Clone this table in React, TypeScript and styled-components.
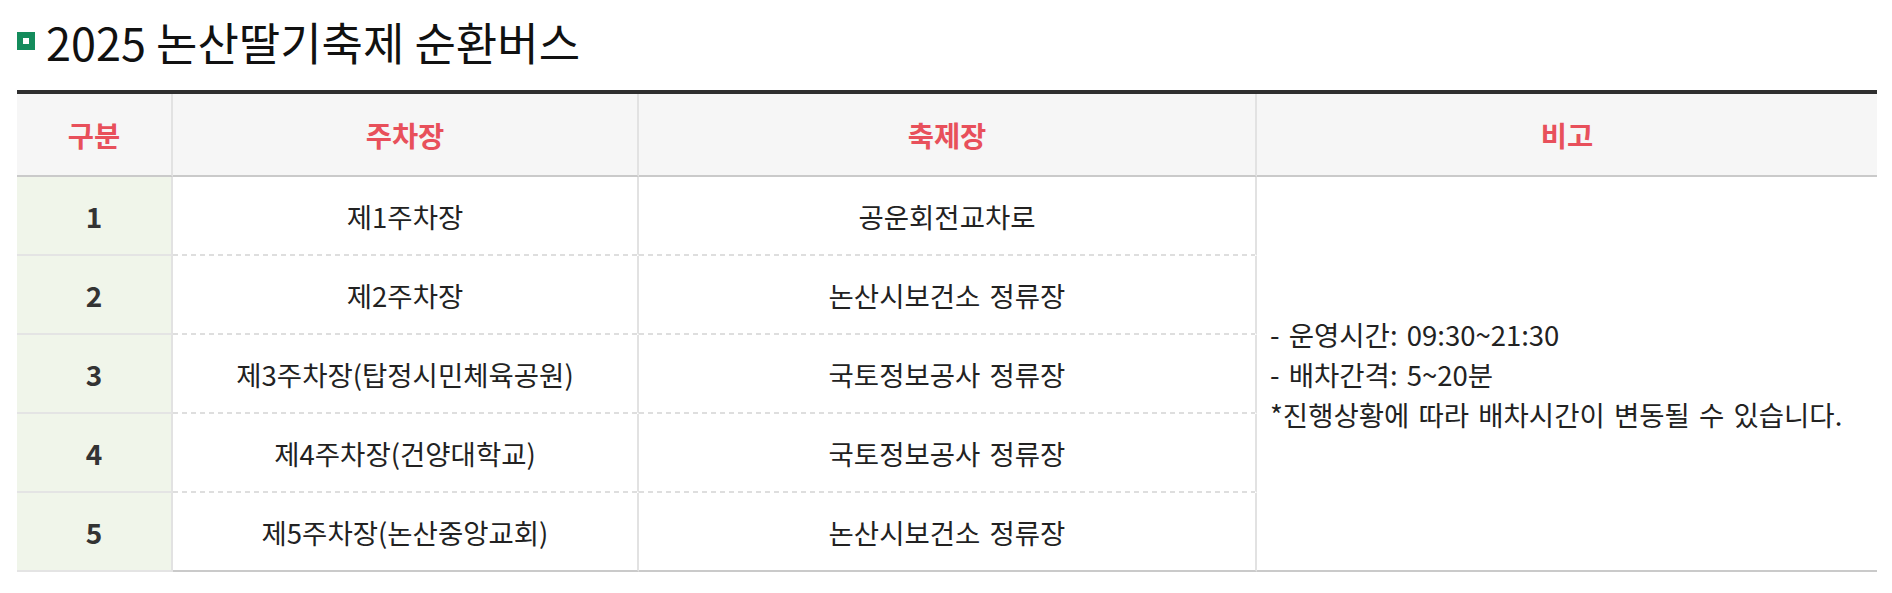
import React from "react";
import styled, { createGlobalStyle } from "styled-components";

const GlobalStyle = createGlobalStyle`
  html, body {
    margin: 0;
    padding: 0;
    background: #fff;
  }
  body {
    font-family: "Noto Sans CJK KR", "Noto Sans", sans-serif;
    color: #222;
  }
`;

const Page = styled.div`
  padding: 0 15px 0 17px;
`;

const TitleRow = styled.div`
  display: flex;
  align-items: center;
  gap: 11px;
  height: 82px;
  margin-bottom: 8px;
`;

const Bullet = styled.span`
  width: 18px;
  height: 18px;
  box-sizing: border-box;
  background: #148c5c;
  display: flex;
  align-items: center;
  justify-content: center;

  &::after {
    content: "";
    width: 6px;
    height: 6px;
    background: #fff;
  }
`;

const Title = styled.h2`
  margin: 0;
  font-size: 45px;
  font-weight: 400;
  line-height: 1;
  color: #111;
`;

const Table = styled.div`
  display: grid;
  grid-template-columns: 156px 466px 618px 620px;
  grid-template-rows: 83px repeat(5, 79px);
  border-top: 4px solid #2f2f2f;
`;

const HeadCell = styled.div<{ $last?: boolean }>`
  box-sizing: border-box;
  background: #f6f6f6;
  border-bottom: 2px solid #cacaca;
  border-right: ${(p) => (p.$last ? "none" : "2px solid #e2e2e2")};
  display: flex;
  align-items: center;
  justify-content: center;
  color: #e8505b;
  font-size: 28.5px;
  font-weight: 700;
`;

const NumCell = styled.div`
  box-sizing: border-box;
  background: #f0f5ea;
  border-right: 2px solid #e2e2e2;
  border-bottom: 2px solid #e4e4e4;
  display: flex;
  align-items: center;
  justify-content: center;
  color: #333;
  font-size: 28px;
  font-weight: 700;
`;

const TextCell = styled.div<{ $last?: boolean }>`
  box-sizing: border-box;
  border-right: 2px solid #e2e2e2;
  display: flex;
  align-items: center;
  justify-content: center;
  color: #222;
  font-size: 27.5px;
  word-spacing: 3px;
  ${(p) =>
    p.$last
      ? "border-bottom: 2px solid #cacaca;"
      : `
    border-bottom: 2px solid transparent;
    background-image: linear-gradient(to right, #dedede 5px, transparent 5px);
    background-size: 9px 2px;
    background-repeat: repeat-x;
    background-position: left bottom;
    background-origin: border-box;
  `}
`;

const NoteCell = styled.div`
  box-sizing: border-box;
  grid-column: 4;
  grid-row: 2 / span 5;
  border-bottom: 2px solid #cacaca;
  display: flex;
  flex-direction: column;
  justify-content: center;
  padding-left: 13px;
  color: #222;
  font-size: 27.5px;
  word-spacing: 3px;
`;

const NoteLine = styled.div`
  line-height: 40px;
`;

const ROWS = [
  { no: 1, parking: "제1주차장", stop: "공운회전교차로" },
  { no: 2, parking: "제2주차장", stop: "논산시보건소 정류장" },
  { no: 3, parking: "제3주차장(탑정시민체육공원)", stop: "국토정보공사 정류장" },
  { no: 4, parking: "제4주차장(건양대학교)", stop: "국토정보공사 정류장" },
  { no: 5, parking: "제5주차장(논산중앙교회)", stop: "논산시보건소 정류장" },
];

const NOTES = [
  "- 운영시간: 09:30~21:30",
  "- 배차간격: 5~20분",
  "*진행상황에 따라 배차시간이 변동될 수 있습니다.",
];

export default function App() {
  return (
    <Page>
      <GlobalStyle />
      <TitleRow>
        <Bullet />
        <Title>2025 논산딸기축제 순환버스</Title>
      </TitleRow>
      <Table>
        <HeadCell>구분</HeadCell>
        <HeadCell>주차장</HeadCell>
        <HeadCell>축제장</HeadCell>
        <HeadCell $last>비고</HeadCell>
        {ROWS.map((row, i) => {
          const last = i === ROWS.length - 1;
          return (
            <React.Fragment key={row.no}>
              <NumCell style={{ gridRow: i + 2, gridColumn: 1 }}>{row.no}</NumCell>
              <TextCell $last={last} style={{ gridRow: i + 2, gridColumn: 2 }}>
                {row.parking}
              </TextCell>
              <TextCell $last={last} style={{ gridRow: i + 2, gridColumn: 3 }}>
                {row.stop}
              </TextCell>
            </React.Fragment>
          );
        })}
        <NoteCell>
          {NOTES.map((n) => (
            <NoteLine key={n}>{n}</NoteLine>
          ))}
        </NoteCell>
      </Table>
    </Page>
  );
}
